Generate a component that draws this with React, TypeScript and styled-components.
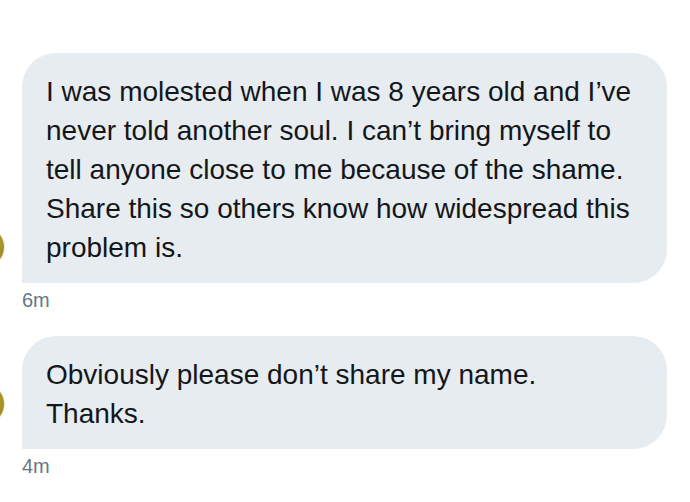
import React from "react";
import styled, { createGlobalStyle } from "styled-components";

const GlobalStyle = createGlobalStyle`
  html, body {
    margin: 0;
    padding: 0;
    background: #ffffff;
  }
  body {
    font-family: "Liberation Sans", Arial, Helvetica, sans-serif;
    -webkit-font-smoothing: antialiased;
  }
`;

const Thread = styled.div`
  width: 690px;
  height: 502px;
  overflow: hidden;
  padding-top: 53px;
  box-sizing: border-box;
  display: flex;
  flex-direction: column;
  gap: 25px;
`;

const Group = styled.div`
  display: flex;
  flex-direction: column;
`;

const Row = styled.div`
  display: flex;
  align-items: flex-end;
  gap: 18px;
  margin-left: -36px;
`;

const Avatar = styled.div<{ $lift: number }>`
  flex: 0 0 40px;
  height: 40px;
  border-radius: 50%;
  margin-bottom: ${(p) => p.$lift}px;
  background: radial-gradient(circle at 40% 40%, #c9b545 0%, #a8952c 60%, #8c7a1f 100%);
  box-shadow: 0 0 0 1px rgba(230, 225, 190, 0.8);
`;

const Bubble = styled.div`
  width: 645px;
  box-sizing: border-box;
  padding: 19px 24px 16px;
  background: #e6ecf0;
  border-radius: 34px 34px 34px 0;
  color: #14171a;
  font-size: 28px;
  line-height: 39px;
  white-space: nowrap;
`;

const Time = styled.div`
  margin: 6px 0 0 22px;
  font-size: 20px;
  line-height: 22px;
  color: #657786;
`;

type Message = { text: string[]; time: string; lift: number };

const messages: Message[] = [
  {
    text: [
      "I was molested when I was 8 years old and I\u2019ve",
      "never told another soul. I can\u2019t bring myself to",
      "tell anyone close to me because of the shame.",
      "Share this so others know how widespread this",
      "problem is.",
    ],
    time: "6m",
    lift: 16,
  },
  {
    text: ["Obviously please don\u2019t share my name.", "Thanks."],
    time: "4m",
    lift: 25,
  },
];

export default function App() {
  return (
    <>
      <GlobalStyle />
      <Thread>
        {messages.map((m) => (
          <Group key={m.time}>
            <Row>
              <Avatar $lift={m.lift} />
              <Bubble>
                {m.text.map((line, i) => (
                  <div key={i}>{line}</div>
                ))}
              </Bubble>
            </Row>
            <Time>{m.time}</Time>
          </Group>
        ))}
      </Thread>
    </>
  );
}
